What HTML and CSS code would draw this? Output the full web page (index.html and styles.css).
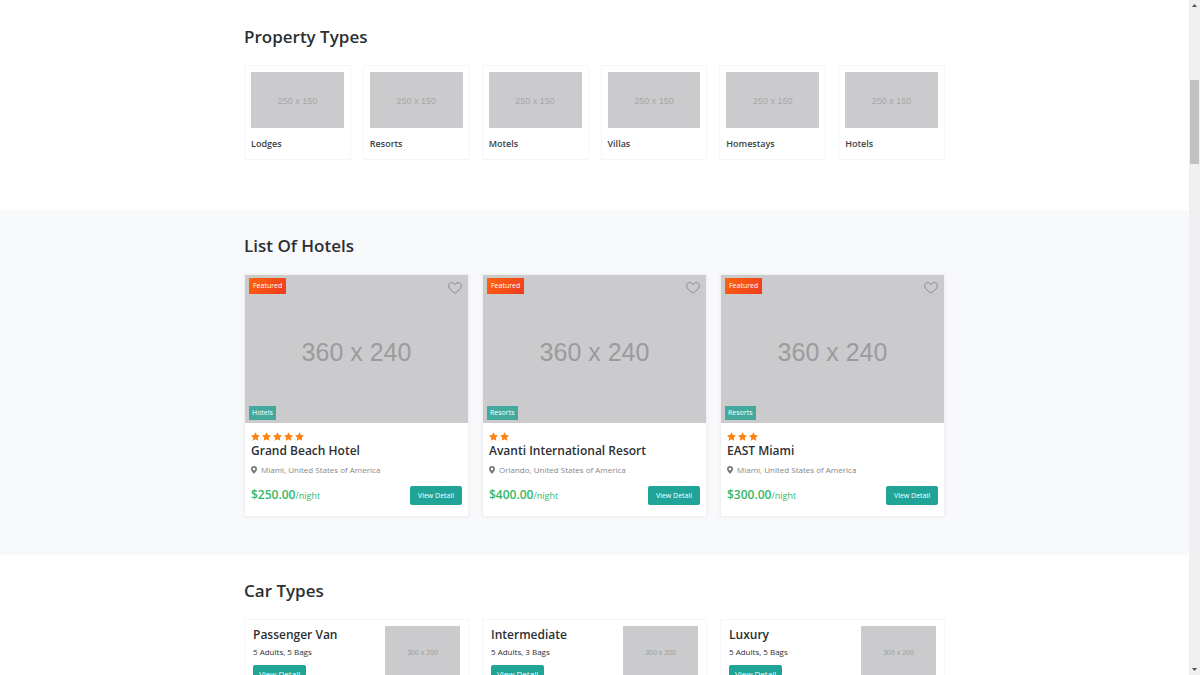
FILE: index.html
```html
<!DOCTYPE html>
<html lang="en">
<head>
<meta charset="utf-8">
<meta name="viewport" content="width=device-width, initial-scale=1">
<title>Property Types and Hotels</title>
<link rel="stylesheet" href="styles.css">
</head>
<body>
<svg class="symbols" aria-hidden="true">
  <symbol id="star" viewBox="1 1 22 21"><path d="M12 1l3.400 7 7.600 1.100-5.500 5.400 1.300 7.600L12 18.500l-6.800 3.600 1.300-7.600L1 9.100 8.600 8z"/></symbol>
  <symbol id="pin" viewBox="0 0 12 16"><path fill-rule="evenodd" d="M6 0a6 6 0 0 0-6 6c0 3.500 2.500 5 6 10 3.500-5 6-6.500 6-10a6 6 0 0 0-6-6zm0 3.500a2.500 2.500 0 1 1 0 5 2.500 2.500 0 0 1 0-5z"/></symbol>
  <symbol id="heart" viewBox="0 0 14 12"><path d="M7 11.300C4.500 9.200.6 6.700.6 3.900.6 2 2 .6 3.800.6 5.200.6 6.400 1.400 7 2.600 7.600 1.400 8.800.6 10.200.6c1.800 0 3.200 1.400 3.200 3.300 0 2.800-3.900 5.300-6.400 7.400z"/></symbol>
</svg>
<main class="page">
  <section class="section types">
    <div class="container">
      <h2 class="heading">Property Types</h2>
      <div class="type-grid">
        <article class="type-card"><div class="thumb thumb-type">250 x 150</div><h3 class="type-name">Lodges</h3></article>
        <article class="type-card"><div class="thumb thumb-type">250 x 150</div><h3 class="type-name">Resorts</h3></article>
        <article class="type-card"><div class="thumb thumb-type">250 x 150</div><h3 class="type-name">Motels</h3></article>
        <article class="type-card"><div class="thumb thumb-type">250 x 150</div><h3 class="type-name">Villas</h3></article>
        <article class="type-card"><div class="thumb thumb-type">250 x 150</div><h3 class="type-name">Homestays</h3></article>
        <article class="type-card"><div class="thumb thumb-type">250 x 150</div><h3 class="type-name">Hotels</h3></article>
      </div>
    </div>
  </section>

  <section class="section hotels">
    <div class="container">
      <h2 class="heading">List Of Hotels</h2>
      <div class="card-grid">
        <article class="hotel-card">
          <div class="thumb thumb-hotel">360 x 240
            <span class="featured">Featured</span>
            <button class="like" type="button" aria-label="Save Grand Beach Hotel"><svg><use href="#heart"/></svg></button>
            <span class="category">Hotels</span>
          </div>
          <div class="hotel-body">
            <div class="stars"><svg><use href="#star"/></svg><svg><use href="#star"/></svg><svg><use href="#star"/></svg><svg><use href="#star"/></svg><svg><use href="#star"/></svg></div>
            <h3 class="title">Grand Beach Hotel</h3>
            <p class="place"><svg><use href="#pin"/></svg>Miami, United States of America</p>
            <div class="hotel-foot"><p class="price">$250.00<span class="per">/night</span></p><a class="btn btn-hotel" href="#">View Detail</a></div>
          </div>
        </article>
        <article class="hotel-card">
          <div class="thumb thumb-hotel">360 x 240
            <span class="featured">Featured</span>
            <button class="like" type="button" aria-label="Save Avanti International Resort"><svg><use href="#heart"/></svg></button>
            <span class="category">Resorts</span>
          </div>
          <div class="hotel-body">
            <div class="stars"><svg><use href="#star"/></svg><svg><use href="#star"/></svg></div>
            <h3 class="title">Avanti International Resort</h3>
            <p class="place"><svg><use href="#pin"/></svg>Orlando, United States of America</p>
            <div class="hotel-foot"><p class="price">$400.00<span class="per">/night</span></p><a class="btn btn-hotel" href="#">View Detail</a></div>
          </div>
        </article>
        <article class="hotel-card">
          <div class="thumb thumb-hotel">360 x 240
            <span class="featured">Featured</span>
            <button class="like" type="button" aria-label="Save EAST Miami"><svg><use href="#heart"/></svg></button>
            <span class="category">Resorts</span>
          </div>
          <div class="hotel-body">
            <div class="stars"><svg><use href="#star"/></svg><svg><use href="#star"/></svg><svg><use href="#star"/></svg></div>
            <h3 class="title">EAST Miami</h3>
            <p class="place"><svg><use href="#pin"/></svg>Miami, United States of America</p>
            <div class="hotel-foot"><p class="price">$300.00<span class="per">/night</span></p><a class="btn btn-hotel" href="#">View Detail</a></div>
          </div>
        </article>
      </div>
    </div>
  </section>

  <section class="section cars">
    <div class="container">
      <h2 class="heading">Car Types</h2>
      <div class="card-grid">
        <article class="car-card"><div class="car-info"><h3 class="title">Passenger Van</h3><p class="capacity">5 Adults, 5 Bags</p><a class="btn btn-car" href="#">View Detail</a></div><div class="thumb thumb-car">300 x 200</div></article>
        <article class="car-card"><div class="car-info"><h3 class="title">Intermediate</h3><p class="capacity">5 Adults, 3 Bags</p><a class="btn btn-car" href="#">View Detail</a></div><div class="thumb thumb-car">300 x 200</div></article>
        <article class="car-card"><div class="car-info"><h3 class="title">Luxury</h3><p class="capacity">5 Adults, 5 Bags</p><a class="btn btn-car" href="#">View Detail</a></div><div class="thumb thumb-car">300 x 200</div></article>
      </div>
    </div>
  </section>
</main>
<div class="scrollbar" aria-hidden="true">
  <svg class="arrow" viewBox="0 0 5 3"><path d="M0 3L2.500 0 5 3z"/></svg>
  <div class="track"><div class="thumb-bar"></div></div>
  <svg class="arrow" viewBox="0 0 5 3"><path d="M0 0L2.500 3 5 0z"/></svg>
</div>
</body>
</html>
```
FILE: styles.css
```css
* { box-sizing: border-box; }

body {
  display: flex;
  height: 100vh;
  margin: 0;
  overflow: hidden;
  background: #fff;
  color: #2c2f34;
  font-family: "Open Sans", "Noto Sans", sans-serif;
  font-size: 8px;
}

h2, h3, p { margin: 0; }

.symbols { position: absolute; width: 0; height: 0; }

.page { flex: 1; min-width: 0; overflow: hidden; }

.section { padding: 23px 16px 38px; }
.types { padding-top: 24px; padding-bottom: 50px; }
.hotels { background: #f8f9fb; }

.container { max-width: 701px; margin: 0 auto; }

.heading {
  margin-bottom: 15px;
  font-size: 17px;
  font-weight: 600;
  line-height: 26px;
}

.thumb {
  display: flex;
  align-items: center;
  justify-content: center;
  background: #cbcbcd;
  color: #9b9b9d;
  font-family: "Liberation Sans", Arial, sans-serif;
}

.type-grid {
  display: grid;
  grid-template-columns: repeat(6, 1fr);
  gap: 12px;
}
.type-card {
  padding: 6px 6px 7px;
  border: 1px solid #f4f4f9;
}
.thumb-type { padding-top: 2px; aspect-ratio: 5 / 3; font-size: 9px; color: #a6a6a8; }
.type-name {
  margin-top: 8px;
  color: #3c3f44;
  font-size: 9px;
  font-weight: 600;
  line-height: 16px;
}

.card-grid {
  display: grid;
  grid-template-columns: repeat(3, 1fr);
  gap: 13px;
}

.hotel-card {
  border: 1px solid #f1f1f4;
  background: #fff;
  box-shadow: 0 0 3px #ebecf0;
}
.thumb-hotel {
  position: relative;
  padding-top: 6px;
  aspect-ratio: 3 / 2;
  font-size: 25px;
}

.featured, .category {
  position: absolute;
  left: 4px;
  color: #fff;
  font-family: "Open Sans", "Noto Sans", sans-serif;
  font-size: 7px;
}
.featured {
  top: 3px;
  padding: 0 4px;
  background: linear-gradient(135deg, #fc6510, #ee3a20);
  line-height: 16px;
}
.category {
  bottom: 3px;
  padding: 0 3px;
  background: #43a99d;
  line-height: 14px;
}
.like {
  position: absolute;
  top: 7px;
  right: 6px;
  display: flex;
  padding: 0;
  border: 0;
  background: none;
}
.like svg { width: 14px; height: 12px; fill: none; stroke: #8b8b8d; }

.hotel-body { padding: 9px 6px 11px; }
.stars { display: flex; gap: 2px; }
.stars svg { width: 9px; height: 9px; fill: #fd8310; }
.title { font-size: 12px; font-weight: 600; line-height: 18px; }
.hotel-body .title { margin-top: 1px; }
.place {
  display: flex;
  align-items: center;
  gap: 4px;
  margin-top: 4px;
  color: #85878b;
  line-height: 12px;
}
.place svg { width: 6px; height: 8px; fill: #77797d; }
.hotel-foot {
  display: flex;
  align-items: center;
  justify-content: space-between;
  margin-top: 10px;
}
.price { color: #35b768; font-size: 12px; font-weight: 600; line-height: 18px; }
.per { font-size: 9px; font-weight: 400; }

.btn {
  display: inline-block;
  padding: 0 8px;
  border-radius: 2px;
  background: #20a497;
  color: #fff;
  font-size: 7px;
  font-weight: 500;
  line-height: 19px;
  text-decoration: none;
}

.car-card {
  display: flex;
  justify-content: space-between;
  padding: 6px 8px;
  border: 1px solid #f6f6fa;
}
.car-info .title { line-height: 17px; }
.capacity { line-height: 18px; }
.btn-car {
  display: block;
  width: fit-content;
  margin-top: 4px;
  padding: 0 6px;
  font-size: 8px;
  line-height: 18px;
}
.thumb-car { width: 75px; height: 50px; padding-top: 2px; font-size: 7px; }

.scrollbar {
  display: flex;
  flex-direction: column;
  align-items: center;
  width: 11px;
  padding: 4px 0;
  background: #f0f0f2;
}
.arrow { width: 5px; height: 3px; fill: #505050; }
.track { flex: 1; width: 9px; padding-top: 73px; }
.thumb-bar { height: 84px; background: #c1c1c3; }
```
